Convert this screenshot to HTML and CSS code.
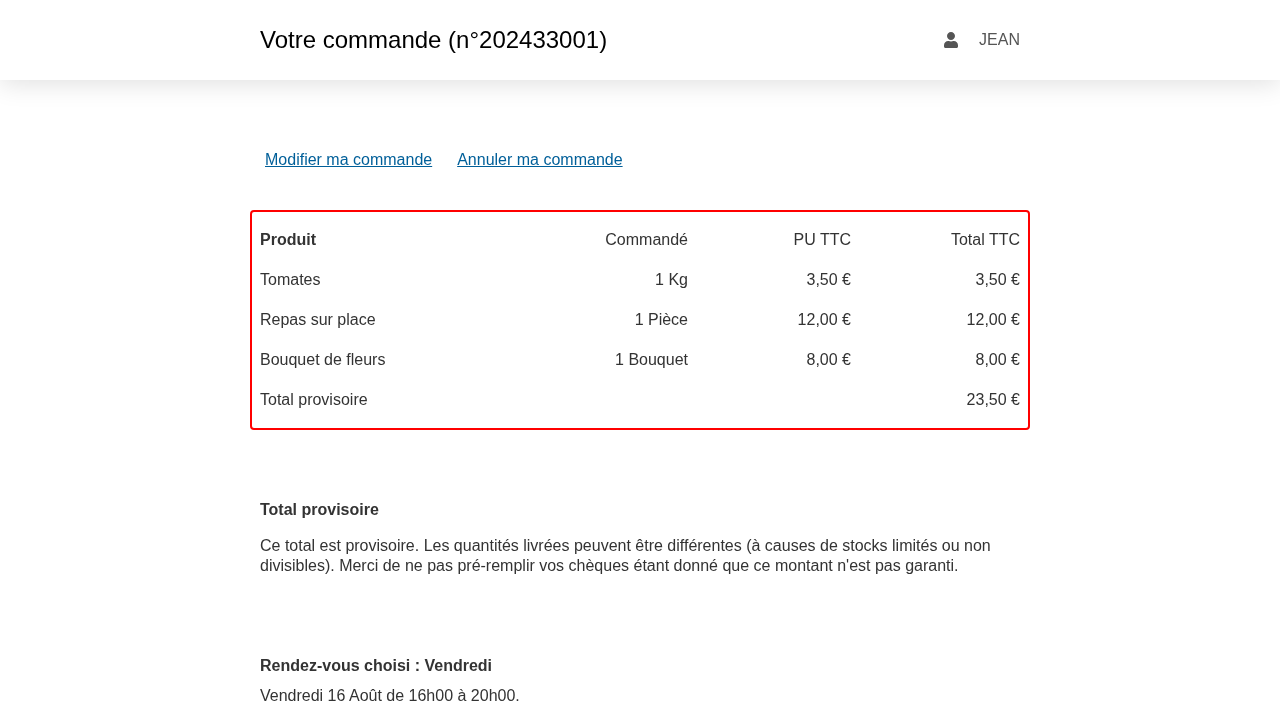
FILE: index.html
```html
<!DOCTYPE html>
<html lang="fr">
<head>
<meta charset="utf-8">
<title>Votre commande</title>
<link rel="stylesheet" href="styles.css">
</head>
<body>
<header class="topbar">
  <div class="container topbar-inner">
    <h1 class="title">Votre commande (n°202433001)</h1>
    <div class="user">
      <svg class="user-icon" viewBox="0 0 448 512" aria-hidden="true"><path d="M224 256c70.700 0 128-57.300 128-128S294.700 0 224 0 96 57.300 96 128s57.300 128 128 128zm89.600 32h-16.700c-22.200 10.200-46.900 16-72.900 16s-50.600-5.800-72.900-16h-16.700C60.200 288 0 348.200 0 422.400V464c0 26.500 21.500 48 48 48h352c26.500 0 48-21.500 48-48v-41.600c0-74.200-60.200-134.400-134.400-134.400z"/></svg>
      <span>JEAN</span>
    </div>
  </div>
</header>
<main class="container">
  <nav class="actions">
    <a href="#">Modifier ma commande</a>
    <a href="#">Annuler ma commande</a>
  </nav>
  <div class="order-box">
    <table class="order">
      <tr><th>Produit</th><td>Commandé</td><td>PU TTC</td><td>Total TTC</td></tr>
      <tr><td>Tomates</td><td>1 Kg</td><td>3,50 €</td><td>3,50 €</td></tr>
      <tr><td>Repas sur place</td><td>1 Pièce</td><td>12,00 €</td><td>12,00 €</td></tr>
      <tr><td>Bouquet de fleurs</td><td>1 Bouquet</td><td>8,00 €</td><td>8,00 €</td></tr>
      <tr><td>Total provisoire</td><td></td><td></td><td>23,50 €</td></tr>
    </table>
  </div>
  <section class="note">
    <h2>Total provisoire</h2>
    <p>Ce total est provisoire. Les quantités livrées peuvent être différentes (à causes de stocks limités ou non divisibles). Merci de ne pas pré-remplir vos chèques étant donné que ce montant n'est pas garanti.</p>
  </section>
  <section class="rdv">
    <h2>Rendez-vous choisi : Vendredi</h2>
    <p>Vendredi 16 Août de 16h00 à 20h00.</p>
  </section>
</main>
</body>
</html>
```
FILE: styles.css
```css
* { box-sizing: border-box; }
html, body { margin: 0; padding: 0; }
body {
  font-family: "Liberation Sans", Arial, sans-serif;
  font-size: 16px;
  line-height: 20px;
  color: #333;
  background: #fff;
  overflow: hidden;
  height: 720px;
}
.container { width: 780px; margin: 0 auto; padding: 0 10px; }
.topbar {
  height: 80px;
  background: #fff;
  box-shadow: 0 4px 24px rgba(0, 0, 0, .12);
}
.topbar-inner {
  height: 80px;
  display: flex;
  align-items: center;
  justify-content: space-between;
  will-change: transform;
}
.title { margin: 0; font-size: 24px; line-height: 30px; font-weight: 400; color: #000; }
.user { display: flex; align-items: center; gap: 21px; color: #555; }
.user-icon { width: 14px; height: 16px; fill: #555; display: block; }
main.container { will-change: transform; }
.actions { margin-top: 70px; display: flex; gap: 25px; padding-left: 5px; }
.actions a { color: #005f99; text-decoration: underline; }
.order-box {
  margin: 40px -10px 0;
  border: 2px solid #f00;
  border-radius: 4px;
  height: 220px;
  padding: 8px 8px;
}
.order { width: 100%; border-collapse: collapse; }
.order th, .order td { height: 40px; padding: 0; text-align: right; font-weight: 400; }
.order th { font-weight: 700; }
.order tr > :first-child { text-align: left; width: 260px; }
.order tr > :nth-child(2) { width: 168px; }
.order tr > :nth-child(3) { width: 163px; }
.note { margin-top: 70px; }
h2 { margin: 0; font-size: 16px; line-height: 20px; font-weight: 700; }
p { margin: 0; }
.note p { margin-top: 16px; }
.rdv { margin-top: 80px; }
.rdv p { margin-top: 10px; }
```
